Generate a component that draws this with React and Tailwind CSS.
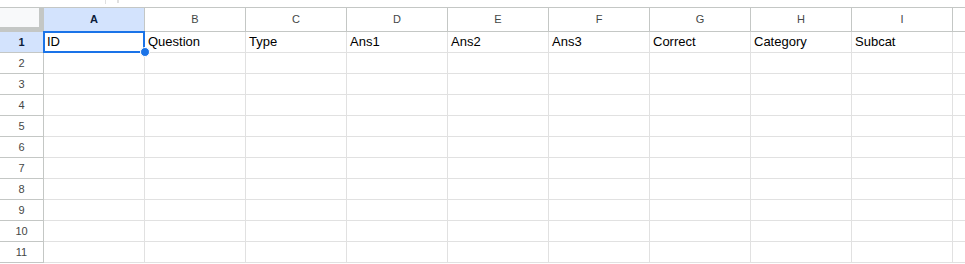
import React from "react";

const columnas = ["A", "B", "C", "D", "E", "F", "G", "H", "I"];
const encabezados = ["ID", "Question", "Type", "Ans1", "Ans2", "Ans3", "Correct", "Category", "Subcat"];
const filas = Array.from({ length: 11 }, (_, i) => i + 1);

const App = () => {
  return (
    <div
      className="w-[965px] h-[264px] overflow-hidden bg-white"
      style={{ fontFamily: '"Liberation Sans", Arial, sans-serif' }}
    >
      {/* franja superior */}
      <div className="h-[7px] relative">
        <span className="absolute left-[105px] top-0 w-px h-[4px] bg-[#e0e0e0]" />
        <span className="absolute left-[117px] top-0 w-[2px] h-[3px] bg-[#e0e0e0]" />
      </div>

      <div className="relative grid grid-cols-[44px_repeat(9,101px)_1fr]">
        {/* encabezado de columnas */}
        <div className="h-[25px] border-t border-[#c4c7c5] bg-[#f8f9fa] flex">
          <div className="flex-1 flex flex-col">
            <div className="flex-1" />
            <div className="h-[5px] bg-[#c4c7c5]" />
          </div>
          <div className="w-[5px] bg-[#c4c7c5]" />
        </div>
        {columnas.map(col => (
          <div
            key={col}
            className={`h-[25px] border-t border-b border-r border-[#c4c7c5] flex items-center justify-center text-[11px] ${
              col === "A"
                ? "bg-[#d3e3fd] font-bold text-[#0b1d3a]"
                : "bg-white text-[#444746]"
            }`}
          >
            {col}
          </div>
        ))}
        <div className="h-[25px] border-t border-b border-[#c4c7c5] bg-white" />

        {/* filas */}
        {filas.map(n => (
          <React.Fragment key={n}>
            <div
              className={`h-[21px] border-b border-r border-[#c4c7c5] flex items-center justify-center text-[11px] ${
                n === 1
                  ? "bg-[#d3e3fd] font-bold text-[#0b1d3a]"
                  : "bg-white text-[#444746]"
              }`}
            >
              {n}
            </div>
            {columnas.map((col, i) => (
              <div
                key={col}
                className="h-[21px] border-b border-r border-[#e1e1e1] px-[3px] text-[13px] text-black leading-[20px] whitespace-nowrap overflow-hidden"
              >
                {n === 1 ? encabezados[i] : ""}
              </div>
            ))}
            <div className="h-[21px] border-b border-[#e1e1e1]" />
          </React.Fragment>
        ))}

        {/* selección A1 */}
        <div className="absolute left-[43px] top-[24px] w-[102px] h-[22px] border-2 border-[#1a73e8] pointer-events-none" />
        <div className="absolute left-[140px] top-[40px] w-[10px] h-[10px] rounded-full bg-[#1a73e8] border border-white pointer-events-none" />
      </div>
    </div>
  );
};

export default App;
